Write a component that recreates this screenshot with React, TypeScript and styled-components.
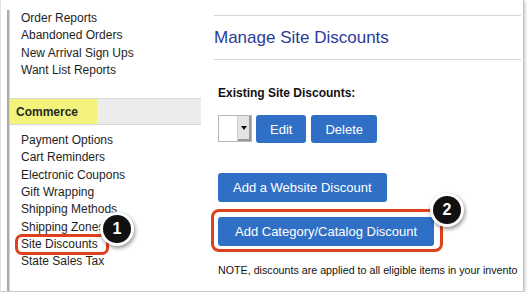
import styled, { createGlobalStyle } from 'styled-components';

const GlobalStyle = createGlobalStyle`
    html, body {
        margin: 0;
        padding: 0;
        background: #ffffff;
    }
    body {
        font-family: 'Liberation Sans', Arial, Helvetica, sans-serif;
        color: #1e1e1e;
    }
`;

const topLinks = ['Order Reports', 'Abandoned Orders', 'New Arrival Sign Ups', 'Want List Reports'];

const commerceLinks = [
    'Payment Options',
    'Cart Reminders',
    'Electronic Coupons',
    'Gift Wrapping',
    'Shipping Methods',
    'Shipping Zones',
    'Site Discounts',
    'State Sales Tax'
];

const App = () => {
    return (
        <>
            <GlobalStyle />
            <Frame>
                <Sidebar>
                    <Nav>
                        <LinkList $top={10}>
                            {topLinks.map((item) => (
                                <NavLink key={item}>{item}</NavLink>
                            ))}
                        </LinkList>
                        <SectionBand>
                            <Highlighter>Commerce</Highlighter>
                        </SectionBand>
                        <LinkList $top={7}>
                            {commerceLinks.map((item) =>
                                item === 'Site Discounts' ? (
                                    <NavLink key={item}>
                                        <Marked>
                                            {item}
                                            <Ring $inset="-2px -11px -2px -6px" />
                                            <Badge $left={79} $top={-24}>
                                                1
                                            </Badge>
                                        </Marked>
                                    </NavLink>
                                ) : (
                                    <NavLink key={item}>{item}</NavLink>
                                )
                            )}
                        </LinkList>
                    </Nav>
                </Sidebar>
                <Main>
                    <TitleBar>
                        <Title>Manage Site Discounts</Title>
                    </TitleBar>
                    <Body>
                        <Label>Existing Site Discounts:</Label>
                        <ControlRow>
                            <Select>
                                <SelectValue />
                                <SelectArrow>
                                    <Caret />
                                </SelectArrow>
                            </Select>
                            <Button>Edit</Button>
                            <Button>Delete</Button>
                        </ControlRow>
                        <Button $tall $gap={30}>
                            Add a Website Discount
                        </Button>
                        <Marked $gap={15}>
                            <Button $tall $wide>
                                Add Category/Catalog Discount
                            </Button>
                            <Ring $inset="-8px -9px -6px -7px" $radius={8} />
                            <Badge $left={212} $top={-24}>
                                2
                            </Badge>
                        </Marked>
                        <Note>NOTE, discounts are applied to all eligible items in your invento</Note>
                    </Body>
                </Main>
            </Frame>
        </>
    );
};

export default App;

const Frame = styled.div`
    display: flex;
    width: 524px;
    height: 292px;
    border-left: 1px solid #e2e2e2;
    border-right: 1px solid #c9c9c9;
    border-bottom: 1px solid #c9c9c9;
    box-shadow: 1px 1px 3px rgba(0, 0, 0, 0.25);
    background: #ffffff;
    overflow: hidden;
    box-sizing: border-box;
`;

const Sidebar = styled.aside`
    width: 200px;
    flex-shrink: 0;
    padding-left: 6px;
    box-sizing: border-box;
`;

const Nav = styled.nav`
    height: 288px;
    border-left: 2px solid #ababab;
    box-shadow: inset 1px 0 0 #d4d4d4;
`;

const LinkList = styled.ul<{ $top: number }>`
    list-style: none;
    margin: ${({ $top }) => $top}px 0 0;
    padding: 0 0 0 12px;
`;

const NavLink = styled.li`
    font-size: 12px;
    line-height: 17.3px;
    color: #1e1e1e;
    white-space: nowrap;
`;

const SectionBand = styled.div`
    display: flex;
    height: 25px;
    margin: 19px 0 0 1px;
    background: #ececec;
    border-top: 1px solid #d9d9d9;
    border-bottom: 1px solid #d9d9d9;
`;

const Highlighter = styled.div`
    display: flex;
    align-items: center;
    width: 81px;
    padding-left: 6px;
    background: #f3f27a;
    font-size: 12px;
    font-weight: bold;
    color: #1f2a22;
`;

const Marked = styled.div<{ $gap?: number }>`
    position: relative;
    display: inline-block;
    margin-top: ${({ $gap }) => $gap ?? 0}px;
`;

const Ring = styled.span<{ $inset: string; $radius?: number }>`
    position: absolute;
    inset: ${({ $inset }) => $inset};
    border: 3px solid #e0411d;
    border-radius: ${({ $radius }) => $radius ?? 7}px;
    pointer-events: none;
`;

const Badge = styled.span<{ $left: number; $top: number }>`
    position: absolute;
    left: ${({ $left }) => $left}px;
    top: ${({ $top }) => $top}px;
    display: flex;
    align-items: center;
    justify-content: center;
    width: 28px;
    height: 28px;
    border: 3px solid #ffffff;
    border-radius: 50%;
    background: #111111;
    color: #ffffff;
    font-size: 16px;
    font-weight: bold;
    box-shadow: 1px 2px 4px rgba(0, 0, 0, 0.45);
    z-index: 2;
`;

const Main = styled.main`
    flex: 1;
    min-width: 0;
    padding: 15px 2px 0 13px;
    overflow: hidden;
`;

const TitleBar = styled.div`
    display: flex;
    align-items: center;
    height: 43px;
    border-top: 1px solid #d6d6d6;
    border-bottom: 1px solid #d6d6d6;
`;

const Title = styled.h1`
    margin: 0;
    font-size: 17px;
    font-weight: normal;
    color: #2b3b97;
`;

const Body = styled.div`
    display: flex;
    flex-direction: column;
    align-items: flex-start;
    padding-left: 4px;
`;

const Label = styled.div`
    margin-top: 26px;
    font-size: 12px;
    line-height: 14px;
    font-weight: bold;
    color: #111111;
`;

const ControlRow = styled.div`
    display: flex;
    align-items: flex-start;
    gap: 5px;
    margin-top: 15px;
`;

const Select = styled.div`
    display: flex;
    width: 34px;
    height: 27px;
    margin-right: -1px;
    border: 1px solid #b5b5b5;
    box-sizing: border-box;
    background: #ffffff;
`;

const SelectValue = styled.div`
    flex: 1;
`;

const SelectArrow = styled.div`
    display: flex;
    align-items: center;
    justify-content: center;
    width: 13px;
    background: #e4e4e4;
    border-left: 1px solid #d0d0d0;
    box-shadow: inset -2px -2px 0 #9a9a9a;
`;

const Caret = styled.span`
    width: 0;
    height: 0;
    margin: 0 1px 1px 0;
    border-left: 3px solid transparent;
    border-right: 3px solid transparent;
    border-top: 4px solid #111111;
`;

const Button = styled.button<{ $tall?: boolean; $wide?: boolean; $gap?: number }>`
    height: ${({ $tall }) => ($tall ? 29 : 28)}px;
    margin-top: ${({ $gap }) => $gap ?? 0}px;
    padding: 0 14px;
    border: none;
    border-radius: 3px;
    background: #2f6fc5;
    color: #ffffff;
    font-family: 'Liberation Sans', Arial, Helvetica, sans-serif;
    font-size: 13px;
    white-space: nowrap;
    cursor: pointer;
    ${({ $tall }) => $tall && 'padding-left: 15px; padding-right: 15px;'}
    ${({ $wide }) => $wide && 'padding-left: 17px; padding-right: 17px;'}
`;

const Note = styled.p`
    margin: 18px 0 0;
    font-size: 10.7px;
    line-height: 13px;
    color: #111111;
    white-space: nowrap;
`;
